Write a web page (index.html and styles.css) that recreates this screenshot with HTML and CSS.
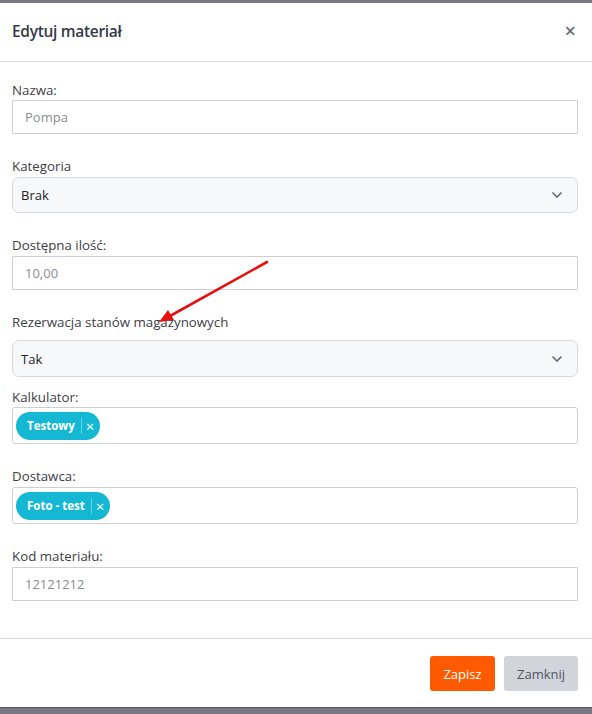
FILE: index.html
```html
<!DOCTYPE html>
<html lang="pl">
<head>
<meta charset="utf-8">
<link rel="stylesheet" href="styles.css">
</head>
<body>
<div class="topbar"></div>
<div class="modal">
  <div class="modal-header">
    <h1 class="title">Edytuj materiał</h1>
    <span class="close">×</span>
  </div>
  <div class="modal-body">
    <div class="group g-nazwa">
      <label class="label">Nazwa:</label>
      <div class="input placeholder">Pompa</div>
    </div>
    <div class="group g-kat">
      <label class="label">Kategoria</label>
      <div class="select"><span>Brak</span>
        <svg class="chev" width="12" height="8" viewBox="0 0 12 8"><path d="M1.5 1.5 L6 6 L10.5 1.5" fill="none" stroke="#666b75" stroke-width="1.6"/></svg>
      </div>
    </div>
    <div class="group g-ilosc">
      <label class="label">Dostępna ilość:</label>
      <div class="input placeholder">10,00</div>
    </div>
    <div class="group g-rez">
      <label class="label">Rezerwacja stanów magazynowych</label>
      <div class="select tall"><span>Tak</span>
        <svg class="chev" width="12" height="8" viewBox="0 0 12 8"><path d="M1.5 1.5 L6 6 L10.5 1.5" fill="none" stroke="#666b75" stroke-width="1.6"/></svg>
      </div>
    </div>
    <div class="group g-kalk">
      <label class="label">Kalkulator:</label>
      <div class="tagbox"><span class="tag"><span class="tag-text">Testowy</span><span class="tag-x">×</span></span></div>
    </div>
    <div class="group g-dost">
      <label class="label">Dostawca:</label>
      <div class="tagbox"><span class="tag"><span class="tag-text">Foto - test</span><span class="tag-x">×</span></span></div>
    </div>
    <div class="group g-kod">
      <label class="label">Kod materiału:</label>
      <div class="input placeholder">12121212</div>
    </div>
  </div>
  <div class="modal-footer">
    <button class="btn btn-primary">Zapisz</button>
    <button class="btn btn-secondary">Zamknij</button>
  </div>
  <svg class="arrow" width="592" height="714" viewBox="0 0 592 714">
    <line x1="267" y1="262" x2="170" y2="316" stroke="#e8100f" stroke-width="2.6" stroke-linecap="round"/>
    <polygon points="159,322 168,310 174,320" fill="#e8100f"/>
  </svg>
</div>
<div class="bottombar"></div>
</body>
</html>
```
FILE: styles.css
```css
* { box-sizing: border-box; }
html, body { margin: 0; padding: 0; }
body {
  width: 592px;
  height: 714px;
  overflow: hidden;
  background: #fff;
  font-family: "Open Sans", "Noto Sans", sans-serif;
  font-size: 13px;
  color: #3b3f46;
}
.topbar {
  height: 3px;
  background: #797882;
}
.modal {
  height: 704px;
  display: flex;
  flex-direction: column;
  background: #fff;
}
.modal-header {
  height: 59px;
  display: flex;
  align-items: center;
  justify-content: space-between;
  padding: 0 16px 2px 12px;
  border-bottom: 1px solid #dcdde0;
}
.title {
  margin: 0;
  font-size: 15.5px;
  font-weight: 600;
  color: #343a48;
  letter-spacing: -0.3px;
}
.close {
  font-size: 20px;
  color: #6b6f78;
  line-height: 1;
  font-weight: 600;
}
.modal-body {
  flex: 1;
  padding: 18px 14px 0 12px;
}
.group { display: flex; flex-direction: column; }
.label {
  height: 20px;
  line-height: 20px;
  font-size: 13.3px;
  color: #3e4148;
}
.g-kat { margin-top: 22px; }
.g-kat .label { margin-bottom: 1px; }
.g-ilosc { margin-top: 22px; }
.g-ilosc .label { margin-bottom: 1px; }
.g-rez { margin-top: 22px; }
.g-rez .label { margin-bottom: 8px; }
.g-kalk { margin-top: 10px; }
.g-dost { margin-top: 22px; }
.g-dost .label { margin-bottom: 1px; }
.g-kod { margin-top: 22px; }
.g-kod .label { margin-bottom: 1px; }
.input {
  height: 34px;
  border: 1px solid #cfd0d3;
  border-radius: 1px;
  padding: 0 12px;
  display: flex;
  align-items: center;
  font-size: 13px;
}
.placeholder { color: #8a8d93; }
.select {
  height: 36px;
  border: 1px solid #d6d8dc;
  border-radius: 7px;
  background: #f7f8fa;
  padding: 0 14px 0 8px;
  display: flex;
  align-items: center;
  justify-content: space-between;
  color: #212329;
  font-size: 13px;
}
.select.tall { height: 37px; }
.tagbox {
  height: 37px;
  border: 1px solid #cfd0d3;
  border-radius: 3px;
  padding: 0 3px;
  display: flex;
  align-items: center;
}
.tag {
  height: 28px;
  background: #15b8d2;
  border-radius: 14px;
  display: inline-flex;
  align-items: center;
  padding: 0 6px 0 11px;
  color: #fff;
  font-weight: 700;
  font-size: 11.5px;
}
.tag-text { padding-right: 6px; }
.tag-x {
  border-left: 1px solid rgba(255,255,255,0.35);
  padding-left: 4px;
  font-weight: 400;
  font-size: 15px;
  line-height: 16px;
}
.modal-footer {
  height: 69px;
  border-top: 1px solid #dcdde0;
  display: flex;
  justify-content: flex-end;
  align-items: flex-start;
  gap: 9px;
  padding: 17px 14px 0 0;
}
.btn {
  height: 35px;
  border: none;
  border-radius: 3px;
  font-family: inherit;
  font-size: 13px;
  padding: 0 13px;
}
.btn-primary { background: #ff5a00; color: #fff; width: 65px; }
.btn-secondary { background: #d1d4db; color: #505664; width: 74px; }
.arrow {
  position: absolute;
  left: 0;
  top: 0;
  pointer-events: none;
}
.bottombar {
  height: 7px;
  background: #797882;
  border-top: 1px solid #55545c;
}
```
